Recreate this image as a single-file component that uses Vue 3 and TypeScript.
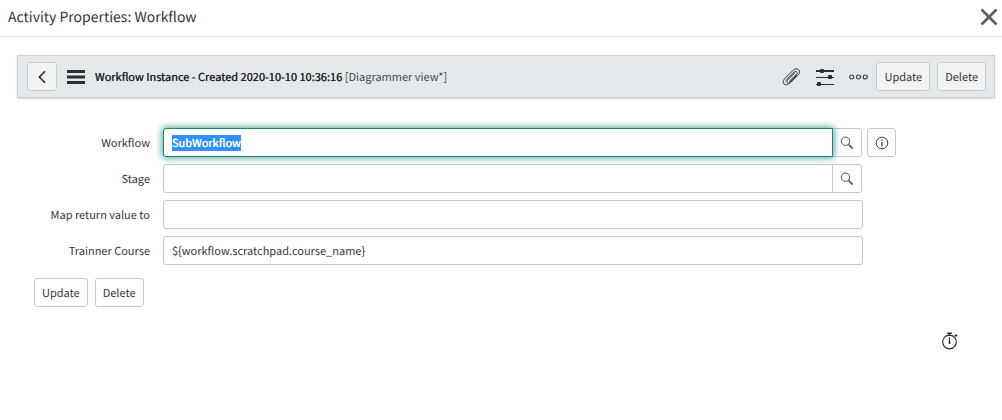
<script setup lang="ts">
import { onMounted, ref } from 'vue'

interface Field {
  id: string
  label: string
  value: string
  lookup: boolean
  info: boolean
}

const fields = ref<Field[]>([
  { id: 'workflow', label: 'Workflow', value: 'SubWorkflow', lookup: true, info: true },
  { id: 'stage', label: 'Stage', value: '', lookup: true, info: false },
  { id: 'map-return', label: 'Map return value to', value: '', lookup: false, info: false },
  { id: 'trainner-course', label: 'Trainner Course', value: '${workflow.scratchpad.course_name}', lookup: false, info: false },
])

const form = ref<HTMLFormElement | null>(null)

onMounted(() => {
  const first = form.value?.querySelector<HTMLInputElement>('#workflow')
  first?.focus()
  first?.select()
})
</script>

<template>
  <div class="dialog">
    <header class="dialog-head">
      <h1>Activity Properties: Workflow</h1>
      <button type="button" class="plain" aria-label="Close">
        <svg width="18" height="18" viewBox="0 0 18 18"><path d="M1.5 1.5L16.5 16.5M16.5 1.5L1.5 16.5" stroke="#5f5f5f" stroke-width="2.8" fill="none" /></svg>
      </button>
    </header>

    <nav class="bar">
      <button type="button" class="btn square" aria-label="Back">
        <svg width="10" height="14" viewBox="0 0 10 14"><path d="M8 1.2L2.4 7L8 12.8" stroke="#2b2e2e" stroke-width="1.6" fill="none" /></svg>
      </button>
      <button type="button" class="plain menu" aria-label="Menu">
        <svg width="18" height="14" viewBox="0 0 18 14"><path d="M0 1.5H18M0 7H18M0 12.5H18" stroke="#2b2e2e" stroke-width="2.8" /></svg>
      </button>
      <h2>Workflow Instance - Created 2020-10-10 10:36:16 <span>[Diagrammer view*]</span></h2>
      <div class="tools">
        <button type="button" class="plain" aria-label="Attachments">
          <svg width="19" height="18" viewBox="0 0 19 18" fill="none" stroke="#33383a" stroke-width="1" stroke-linecap="round">
            <path d="M14.6 7.2L7.1 15.2C5.6 16.8 3.5 17.3 2.1 16C.6 14.7.9 12.6 2.3 11.1L11.2 2.2C12.8.6 15 .3 16.5 1.7C18 3.2 17.8 5.2 16.3 6.8L8.5 14.6C7.6 15.5 6.3 15.7 5.5 14.9C4.6 14.1 4.8 12.9 5.7 12L12.7 4.8" />
            <path d="M4 12.4L12.2 4C13 3.2 14.1 3 14.8 3.7C15.5 4.4 15.3 5.4 14.6 6.2L7.3 13.4" />
          </svg>
        </button>
        <button type="button" class="plain" aria-label="Personalize form">
          <svg width="18" height="18" viewBox="0 0 18 18" fill="#2b2e2e">
            <path d="M0 2H18V4H0ZM0 9H18V10H0ZM0 16H18V17H0Z" />
            <rect x="4" y="1" width="4" height="4" rx="1" /><rect x="12" y="7" width="4" height="4" rx="1" /><rect x="1" y="14" width="4" height="4" rx="1" />
          </svg>
        </button>
        <button type="button" class="plain" aria-label="More options">
          <svg width="19" height="6" viewBox="0 0 19 6" fill="none" stroke="#3c4042" stroke-width="1.2"><circle cx="2.7" cy="3" r="2" /><circle cx="9.5" cy="3" r="2" /><circle cx="16.3" cy="3" r="2" /></svg>
        </button>
      </div>
      <div class="actions">
        <button type="button" class="btn">Update</button>
        <button type="button" class="btn">Delete</button>
      </div>
    </nav>

    <form ref="form" @submit.prevent>
      <div v-for="f in fields" :key="f.id" class="row">
        <label :for="f.id">{{ f.label }}</label>
        <div class="control" :class="{ grouped: f.lookup }">
          <input :id="f.id" v-model="f.value" type="text" autocomplete="off" spellcheck="false" />
          <button v-if="f.lookup" type="button" class="btn lookup" :aria-label="`Look up ${f.label}`">
            <svg width="14" height="14" viewBox="0 0 14 14" fill="none" stroke="#4a4d4f"><circle cx="5.5" cy="5.2" r="4.2" stroke-width="1" /><path d="M8.5 8.4L12.7 12.6" stroke-width="1.5" /></svg>
          </button>
        </div>
        <button v-if="f.info" type="button" class="btn square info" :aria-label="`Preview ${f.label}`">
          <svg width="14" height="14" viewBox="0 0 14 14" fill="none" stroke="#3c4042" stroke-width="1"><circle cx="7" cy="7" r="5.8" /><path d="M7 5.8V10.4" stroke-width="1.3" /><path d="M7 3.4V4.8" stroke-width="1.3" /></svg>
        </button>
      </div>
      <div class="actions bottom">
        <button type="submit" class="btn">Update</button>
        <button type="button" class="btn">Delete</button>
      </div>
    </form>

    <footer>
      <button type="button" class="plain" aria-label="Response time">
        <svg width="18" height="18" viewBox="0 0 18 18" fill="none" stroke="#2b2e2e"><circle cx="8.5" cy="10" r="6.8" stroke-width="1.2" /><path d="M8.5 1V4M6.2 1.2H10.8" stroke-width="1.4" /><path d="M8.5 5.5V11" stroke-width="1.3" /><circle cx="8.5" cy="11" r="1" fill="#2b2e2e" stroke="none" /><path d="M13.4 3.6H16.4M14.9 2.2V5" stroke-width="1" /></svg>
      </button>
    </footer>
  </div>
</template>

<style>
body {
  margin: 0;
  background: #fff;
}
</style>

<style scoped>
.dialog {
  font-family: "Noto Sans CJK SC", "Noto Sans", sans-serif;
  font-size: 11px;
  line-height: 16px;
  color: #333637;
  text-rendering: geometricPrecision;
}
* {
  box-sizing: border-box;
}
button,
input {
  font: inherit;
  color: inherit;
  text-rendering: inherit;
}
svg {
  display: block;
}
.dialog-head {
  display: flex;
  align-items: center;
  justify-content: space-between;
  height: 37px;
  padding: 0 4px 2px 8px;
  border-bottom: 1px solid #dfdfdf;
}
h1 {
  margin: 0;
  font-size: 14px;
  line-height: 20px;
  font-weight: 400;
}
.plain {
  padding: 0;
  border: 0;
  background: none;
}
.bar {
  display: flex;
  align-items: center;
  height: 43px;
  margin: 18px 7px 0 17px;
  padding: 0 8px 0 9px;
  border: 1px solid #cbcfd2;
  background: #e4e8eb;
  box-shadow: 0 1px 2px #d5d5d5;
}
.btn {
  display: flex;
  align-items: center;
  justify-content: center;
  height: 29px;
  padding: 0 7px;
  border: 1px solid #c6c8ca;
  border-radius: 3px;
  background: #fff;
}
.bar .btn {
  background: #f2f3f5;
}
.square {
  width: 30px;
  padding: 0;
}
.menu {
  margin: 0 10px;
}
h2 {
  flex: 1;
  margin: 0;
  font-size: 11px;
  line-height: 16px;
  font-weight: 400;
  color: #222526;
  text-shadow: 0 0 0 currentColor;
}
h2 span {
  color: #45494b;
  text-shadow: none;
}
.tools {
  display: flex;
  align-items: center;
  gap: 15px;
  margin-right: 8px;
}
.actions {
  display: flex;
  gap: 7px;
}
form {
  display: flex;
  flex-direction: column;
  gap: 7px;
  padding: 30px 106px 0 0;
}
.row {
  display: grid;
  grid-template-columns: 150px 1fr 29px;
  align-items: center;
}
label {
  text-align: right;
}
.control {
  display: flex;
  margin: 0 5px 0 13px;
}
.control:not(.grouped) {
  margin-right: 4px;
}
input {
  flex: 1;
  min-width: 0;
  height: 29px;
  padding: 0 8px;
  border: 1px solid #c6c8ca;
  border-radius: 3px;
  background: #fff;
  outline: none;
}
.grouped input {
  border-radius: 3px 0 0 3px;
}
input:focus {
  position: relative;
  z-index: 1;
  border-color: #1f8476;
  box-shadow: 0 0 7px 1px #4fa094;
}
input::selection {
  background: #3390ff;
  color: #fff;
  text-shadow: 0 0 0 #fff;
}
.lookup {
  width: 30px;
  margin-left: -1px;
  padding: 0;
  border-radius: 0 3px 3px 0;
}
.info {
  width: 29px;
}
.bottom {
  margin: 6px 0 0 34px;
}
footer {
  display: flex;
  justify-content: flex-end;
  padding: 25px 43px 0 0;
}
</style>
